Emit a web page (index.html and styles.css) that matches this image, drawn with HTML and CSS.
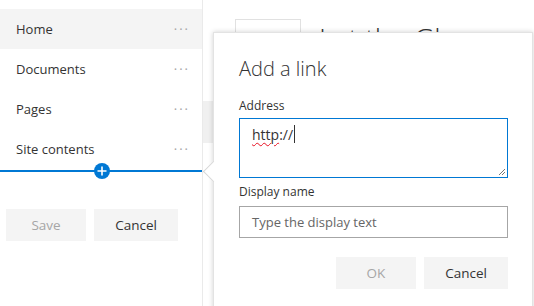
FILE: index.html
```html
<!DOCTYPE html>
<html lang="en">
<head>
  <meta charset="UTF-8">
  <title>Edit navigation</title>
  <link rel="stylesheet" href="styles.css">
</head>
<body>
  <div class="page">
    <!-- Left navigation in edit mode -->
    <nav class="nav">
      <div class="nav-item active"><span>Home</span><span class="more">&middot;&middot;&middot;</span></div>
      <div class="nav-item"><span>Documents</span><span class="more">&middot;&middot;&middot;</span></div>
      <div class="nav-item"><span>Pages</span><span class="more">&middot;&middot;&middot;</span></div>
      <div class="nav-item"><span>Site contents</span><span class="more">&middot;&middot;&middot;</span></div>
      <div class="insert-line">
        <span class="insert-btn">
          <svg width="16" height="16" viewBox="0 0 16 16"><circle cx="8" cy="8" r="8" fill="#0078d4"/><path d="M8 3.5v9M3.5 8h9" stroke="#fff" stroke-width="1.6"/></svg>
        </span>
      </div>
      <div class="nav-actions">
        <button class="btn disabled save">Save</button>
        <button class="btn cancel">Cancel</button>
      </div>
    </nav>

    <!-- Page content behind the callout -->
    <main class="content">
      <div class="side-strip"></div>
      <div class="header">
        <div class="logo-box"></div>
        <div class="site-title">Let the Gl</div>
      </div>

      <!-- Add a link callout -->
      <div class="callout">
        <div class="beak"></div>
        <h2 class="callout-title">Add a link</h2>
        <label class="field-label">Address</label>
        <div class="textarea">
          <span class="typo">http</span>://<span class="caret"></span>
          <svg class="grip" width="8" height="8" viewBox="0 0 8 8"><path d="M7 1L1 7M7 4L4 7" stroke="#777" stroke-width="1"/></svg>
        </div>
        <label class="field-label">Display name</label>
        <div class="text-input">Type the display text</div>
        <div class="callout-actions">
          <button class="btn disabled ok">OK</button>
          <button class="btn cancel">Cancel</button>
        </div>
      </div>
    </main>
  </div>
</body>
</html>
```
FILE: styles.css
```css
/* Base */
body {
  margin: 0;
  font-family: 'Open Sans', 'Noto Sans', sans-serif;
  color: #333;
  background: #fff;
  overflow: hidden;
}

.page {
  display: flex;
  height: 306px;
  overflow: hidden;
}

/* Navigation */
.nav {
  width: 203px;
  border-right: 1px solid #eaeaea;
  padding-top: 9px;
  box-sizing: border-box;
  flex-shrink: 0;
}

.nav-item {
  height: 40px;
  display: flex;
  align-items: center;
  justify-content: space-between;
  padding: 0 12px 0 16px;
  font-size: 13px;
  color: #333;
}

.nav-item.active {
  background: #f4f4f4;
}

.more {
  color: #a6a6a6;
  font-size: 13px;
  letter-spacing: 2px;
}

.insert-line {
  position: relative;
  height: 2px;
  margin-top: 1px;
  background: #0078d4;
}

.insert-btn {
  position: absolute;
  left: 94px;
  top: -7px;
  width: 16px;
  height: 16px;
  line-height: 0;
}

.nav-actions {
  display: flex;
  gap: 8px;
  padding: 37px 0 0 6px;
}

/* Buttons */
.btn {
  height: 32px;
  border: none;
  background: #f4f4f4;
  font-family: inherit;
  font-size: 13.5px;
  font-weight: 400;
  color: #333;
  padding: 0;
}

.btn.disabled {
  color: #a6a6a6;
}

.save,
.ok {
  width: 80px;
}

.cancel {
  width: 84px;
}

/* Content behind */
.content {
  position: relative;
  flex: 1;
}

.side-strip {
  position: absolute;
  left: 0;
  top: 101px;
  width: 10px;
  height: 42px;
  background: #f0f0f0;
}

.header {
  display: flex;
  gap: 18px;
  padding: 19px 0 0 32px;
}

.logo-box {
  width: 64px;
  height: 40px;
  border: 1px solid #e1e1e1;
}

.site-title {
  font-size: 28px;
  font-weight: 300;
  line-height: 28px;
  padding-top: 5px;
  color: #333;
}

/* Callout */
.callout {
  position: absolute;
  left: 10px;
  top: 32px;
  width: 320px;
  height: 280px;
  box-sizing: border-box;
  background: #fff;
  border: 1px solid #e3e3e3;
  box-shadow: 0 0 5px rgba(0, 0, 0, 0.18);
  padding: 19px 24px 0 25px;
}

.beak {
  position: absolute;
  left: -8px;
  top: 131px;
  width: 14px;
  height: 14px;
  background: #fff;
  border-left: 1px solid #d6d6d6;
  border-bottom: 1px solid #d6d6d6;
  transform: rotate(45deg);
}

.callout-title {
  margin: 0;
  font-size: 20px;
  font-weight: 300;
  line-height: 34px;
  color: #333;
}

.field-label {
  display: block;
  font-size: 12px;
  line-height: 16px;
  color: #333;
}

.callout-title + .field-label {
  margin-top: 12px;
  margin-bottom: 4px;
}

.textarea {
  position: relative;
  height: 60px;
  box-sizing: border-box;
  border: 1px solid #0078d4;
  padding: 4px 12px;
  font-size: 14px;
  line-height: 24px;
  color: #333;
}

.typo {
  text-decoration: underline wavy #e81123;
  text-decoration-thickness: 1px;
  text-underline-offset: 2px;
}

.caret {
  display: inline-block;
  width: 1px;
  height: 18px;
  margin-left: 1px;
  background: #333;
  vertical-align: -3px;
}

.grip {
  position: absolute;
  right: 1px;
  bottom: 1px;
}

.textarea + .field-label {
  margin-top: 6px;
  margin-bottom: 6px;
}

.text-input {
  height: 32px;
  box-sizing: border-box;
  border: 1px solid #a6a6a6;
  padding: 0 12px;
  font-size: 13px;
  line-height: 30px;
  color: #666;
}

.callout-actions {
  display: flex;
  justify-content: flex-end;
  gap: 8px;
  margin-top: 19px;
}
```
